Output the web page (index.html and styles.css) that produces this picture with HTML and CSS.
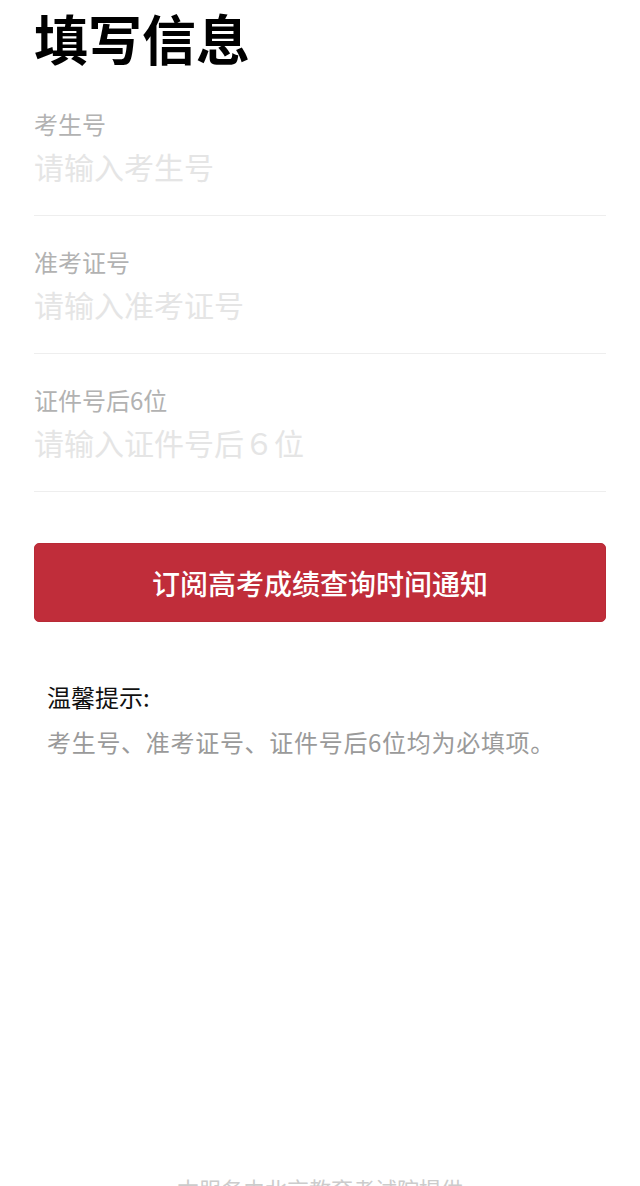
FILE: index.html
```html
<!DOCTYPE html>
<html lang="zh-CN">
<head>
<meta charset="utf-8">
<meta name="viewport" content="width=device-width, initial-scale=1">
<title>填写信息</title>
<link rel="stylesheet" href="styles.css">
</head>
<body>
<div class="page">
  <h1 class="title">填写信息</h1>
  <form class="form">
    <label class="field">
      <span class="field-label">考生号</span>
      <input class="field-input" type="text" placeholder="请输入考生号">
    </label>
    <label class="field">
      <span class="field-label">准考证号</span>
      <input class="field-input" type="text" placeholder="请输入准考证号">
    </label>
    <label class="field">
      <span class="field-label">证件号后6位</span>
      <input class="field-input" type="text" placeholder="请输入证件号后６位">
    </label>
    <button class="submit" type="button">订阅高考成绩查询时间通知</button>
  </form>
  <div class="tips">
    <div class="tips-title">温馨提示:</div>
    <div class="tips-text">考生号、准考证号、证件号后6位均为必填项。</div>
  </div>
  <div class="footer">本服务由北京教育考试院提供</div>
</div>
</body>
</html>
```

FILE: styles.css
```css
* {
  box-sizing: border-box;
}

html, body {
  margin: 0;
  padding: 0;
  background: #ffffff;
}

body {
  font-family: "Noto Sans CJK SC", "Noto Sans", sans-serif;
  color: #111111;
}

.page {
  padding: 0 34px;
}

.title {
  margin: 0;
  padding-top: 6px;
  font-size: 54px;
  line-height: 64px;
  font-weight: 700;
  color: #000000;
  letter-spacing: 0;
}

.form {
  margin-top: 8px;
  display: flex;
  flex-direction: column;
}

.field {
  display: flex;
  flex-direction: column;
  padding-top: 29px;
  padding-bottom: 27px;
  border-bottom: 1px solid #eeeeee;
}

.field-label {
  font-size: 24px;
  line-height: 34px;
  color: #b2b2b2;
}

.field-input {
  margin-top: 3px;
  height: 44px;
  padding: 0;
  border: 0;
  outline: none;
  background: transparent;
  font-family: inherit;
  font-size: 30px;
  line-height: 44px;
  color: #333333;
}

.field-input::placeholder {
  color: #e5e5e5;
}

.submit {
  margin-top: 51px;
  height: 79px;
  width: 100%;
  border: 1px solid #b82a36;
  border-radius: 5px;
  background: #c02d3a;
  color: #ffffff;
  font-family: inherit;
  font-size: 28px;
  font-weight: 500;
  cursor: pointer;
}

.tips {
  margin-top: 58px;
  padding-left: 13px;
}

.tips-title {
  font-size: 24px;
  line-height: 34px;
  color: #111111;
}

.tips-text {
  margin-top: 11px;
  font-size: 24px;
  line-height: 34px;
  letter-spacing: 0.7px;
  color: #9a9a9a;
}

.footer {
  margin-top: 413px;
  text-align: center;
  font-size: 22px;
  line-height: 32px;
  color: #cccccc;
}
```
